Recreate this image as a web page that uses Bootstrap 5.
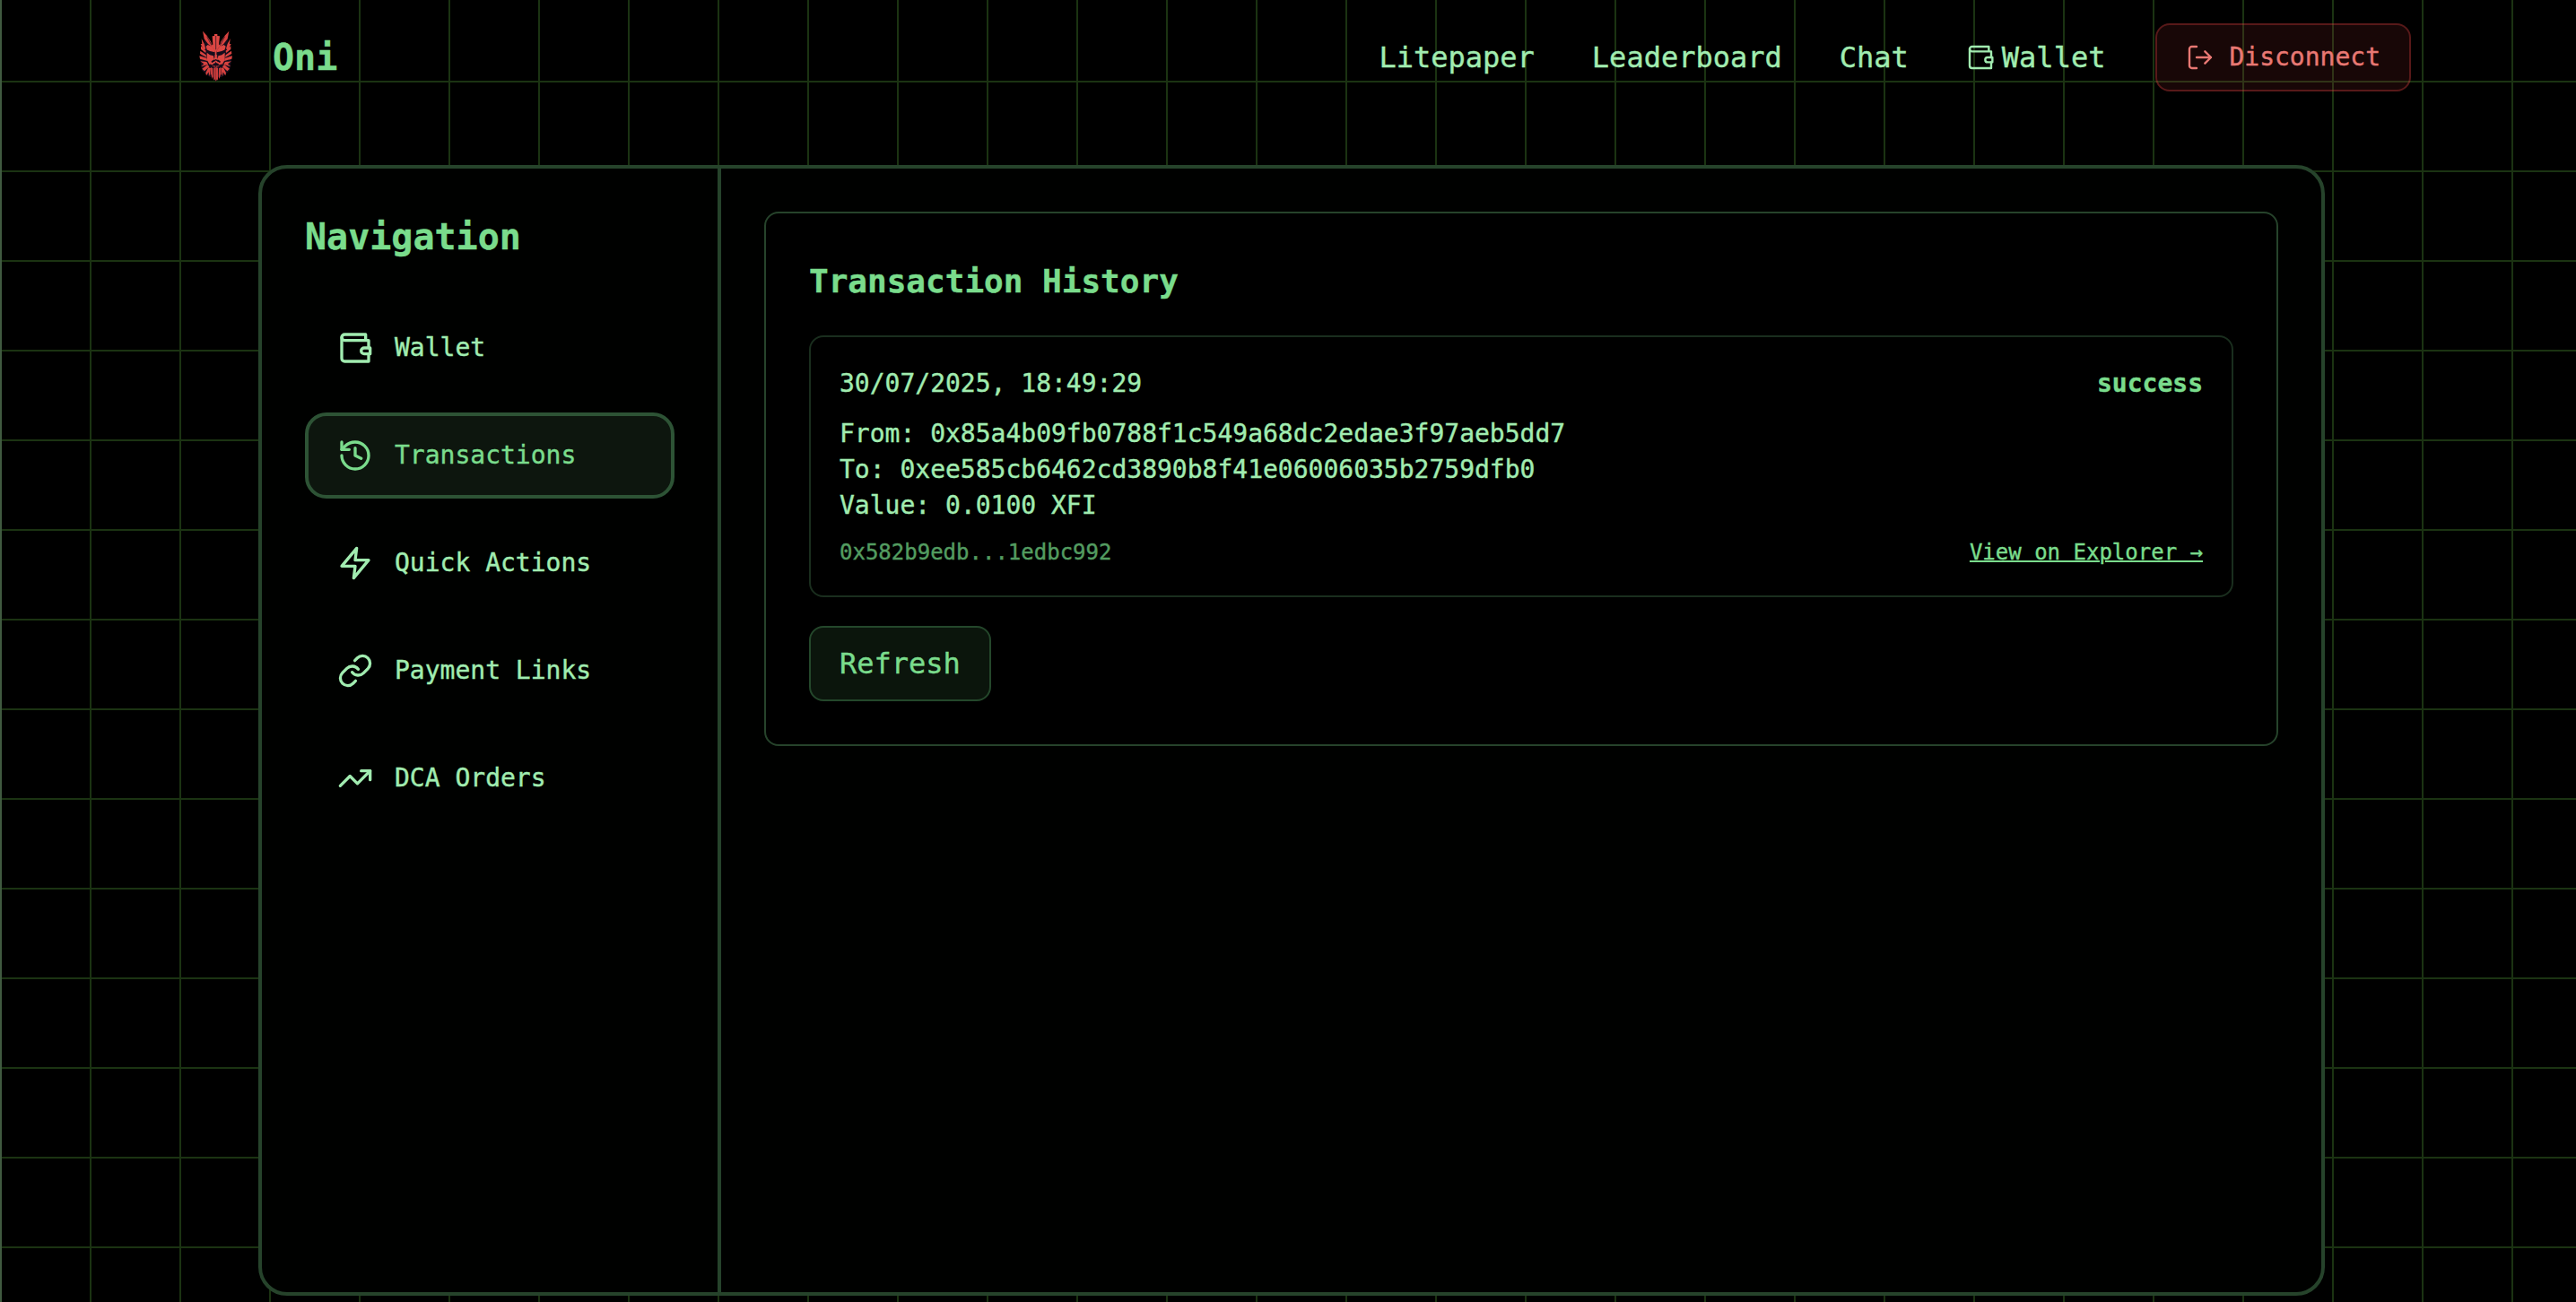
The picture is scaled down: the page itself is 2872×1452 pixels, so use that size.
<!DOCTYPE html>
<html lang="en">
<head>
<meta charset="utf-8">
<title>Oni – Transactions</title>
<meta name="viewport" content="width=device-width, initial-scale=1">
<link rel="stylesheet" href="https://cdn.jsdelivr.net/npm/bootstrap@5.3.0/dist/css/bootstrap.min.css">
<style>
:root{--mint:#a1ecb0;--leaf:#7adc8c;--edge:#26432b}
html,body{height:100%}
body{
  margin:0;overflow:hidden;color:var(--mint);font-family:"DejaVu Sans Mono","Liberation Mono",monospace;
  -webkit-text-stroke:.4px currentColor;
  background-color:#000;
  background-image:linear-gradient(#405a40,#405a40),linear-gradient(to right,#1b3312 2px,transparent 2px),linear-gradient(to bottom,#1b3312 2px,transparent 2px);
  background-size:2px 100%,100px 100px,100px 100px;background-position:0 0,0 0,0 -10px;background-repeat:no-repeat,repeat,repeat;
}
.ico{fill:none;stroke:currentColor;stroke-width:2;stroke-linecap:round;stroke-linejoin:round;flex:none}
.topbar .ico{stroke-width:1.8}
.topbar{height:128px;width:2496px;margin-left:192px;padding:0}
.oni-logo{width:96px;height:80px;margin-right:16px}
.oni-name{font-size:40px;line-height:56px;font-weight:700;color:var(--leaf)}
.toplinks{gap:64px;margin-right:56px}
.toplinks a{font-size:32px;line-height:48px;color:var(--mint);text-decoration:none}
.toplinks .gap-ico{gap:8px}
.btn-leave{--bs-btn-color:#e87873;--bs-btn-bg:rgba(239,68,68,.1);--bs-btn-border-color:rgba(239,68,68,.3);font-family:inherit;font-size:28px;line-height:40px;padding:16px 32px;border-width:2px;border-radius:16px;gap:16px}
.shell{width:2304px;height:1261px;margin:56px 0 0 288px;border:4px solid var(--edge);border-radius:32px;background:#000100;overflow:hidden}
.side{width:512px;border-right:4px solid var(--edge);padding:48px}
.side h2{font-size:40px;line-height:56px;font-weight:700;color:var(--leaf);margin:0 0 48px}
.side .nav{gap:24px}
.side .nav-link{height:96px;padding:0 32px;gap:24px;border:4px solid transparent;border-radius:24px;font-size:28px;line-height:40px;color:var(--mint)}
.side .nav-link.active{background:#0d160e;border-color:#2d5335;color:var(--leaf)}
.main-area{padding:48px}
.panel{border:2px solid var(--edge);border-radius:16px;background:#000;padding:48px;color:inherit}
.panel h3{font-size:36px;line-height:56px;font-weight:700;color:var(--leaf);margin:0 0 32px}
.tx{border:2px solid #1a2e1e;border-radius:16px;padding:32px;font-size:28px;line-height:40px;gap:16px}
.tx .state{color:var(--leaf);font-weight:700}
.tx .foot{font-size:24px;line-height:32px}
.hash{color:#539c60}
.tx a{color:var(--leaf);text-decoration:underline;text-decoration-thickness:2px}
.btn-again{--bs-btn-color:#7adc8c;--bs-btn-bg:#0b150c;--bs-btn-border-color:#24472b;font-family:inherit;font-size:32px;line-height:48px;padding:16px 32px;border-width:2px;border-radius:16px;margin-top:32px}
</style>
</head>
<body>
<header class="topbar navbar d-flex flex-nowrap align-items-center">
  <a class="d-flex align-items-center text-decoration-none" href="#">
    <svg class="oni-logo" viewBox="-72 -12 288 240" aria-hidden="true">
      <defs>
        <g id="half">
          <!-- horn, ear and mane -->
          <path fill="#d8423f" d="M30 20l14 15 14 21 4 18-14-11-13-17zM26 45l9 17 5 17-6 4-5-9-6-11 5 0zM24 70l17 16-1 7-16-12zM22 86l19 14 2 8-22-12zM19 103l24 7 3 10-25-7zM22 121l21 2 5 8-24 8 10-9zM28 146l18-14 6 7-16 15zM40 160l9-18 8 2-3 20-3 7-1-14-8 12z"/>
          <!-- brow, cheek and jaw -->
          <path fill="#dc4743" d="M47 66l15 6 9 12-2 10-24-9-4-14zM44 92l10 8 12 3 2 12-9 6 2 7-8 4-9-16zM62 124l11-5v7l-9 4 4 6 5-2v6l-10-2-6-7z"/>
          <!-- beard -->
          <path fill="#c93c3b" d="M57 141l7 4 1 27-3 8-4-16-2 3zM67 143l7-2v47l-4-7-3 4z"/>
        </g>
      </defs>
      <path fill="#160d1c" d="M34 28l28 42 12-36 14 36 28-42-4 50 16 30-8 44-26 22-10 0-10 16-10-16-10 0-26-22-8-44 16-30z"/>
      <use href="#half"/>
      <use href="#half" transform="matrix(-1 0 0 1 148 0)"/>
      <path fill="#dc4743" d="M62 37l7-1v-6h10v6l8 1-3 29 9-3-15 20-4 26h-1l-4-26-15-20 10 3zM70 98h8l3 17-7 9-7-9z"/>
      <path fill="none" stroke="#160d1c" stroke-width="4" d="M43 84l14 6 13 3M105 84l-14 6-13 3M60 124l14-8 14 8M57 135l17-1 17 1"/>
      <path fill="none" stroke="#160d1c" stroke-width="2" d="M74 36v46M69 96v14M79 96v14M44 38l16 30M104 38L88 68"/>
    </svg>
    <span class="oni-name">Oni</span>
  </a>
  <nav class="toplinks d-flex align-items-center ms-auto">
    <a href="#">Litepaper</a><a href="#">Leaderboard</a><a href="#">Chat</a>
    <a href="#" class="d-flex align-items-center gap-ico"><svg class="ico" width="32" height="32" viewBox="0 0 24 24"><path d="M21 12V7H5a2 2 0 0 1 0-4h14v4"/><path d="M3 5v14a2 2 0 0 0 2 2h16v-5"/><path d="M18 12a2 2 0 0 0 0 4h4v-4Z"/></svg>Wallet</a>
  </nav>
  <button class="btn btn-leave d-flex align-items-center"><svg class="ico" width="32" height="32" viewBox="0 0 24 24"><path d="M9 21H5a2 2 0 0 1-2-2V5a2 2 0 0 1 2-2h4"/><path d="M16 17l5-5-5-5M21 12H9"/></svg>Disconnect</button>
</header>
<div class="shell d-flex">
  <aside class="side flex-shrink-0">
    <h2>Navigation</h2>
    <nav class="nav flex-column">
      <a class="nav-link d-flex align-items-center" href="#"><svg class="ico" width="40" height="40" viewBox="0 0 24 24"><path d="M21 12V7H5a2 2 0 0 1 0-4h14v4"/><path d="M3 5v14a2 2 0 0 0 2 2h16v-5"/><path d="M18 12a2 2 0 0 0 0 4h4v-4Z"/></svg>Wallet</a>
      <a class="nav-link active d-flex align-items-center" href="#"><svg class="ico" width="40" height="40" viewBox="0 0 24 24"><path d="M3 12a9 9 0 1 0 9-9 9.75 9.75 0 0 0-6.74 2.74L3 8"/><path d="M3 3v5h5"/><path d="M12 7v5l4 2"/></svg>Transactions</a>
      <a class="nav-link d-flex align-items-center" href="#"><svg class="ico" width="40" height="40" viewBox="0 0 24 24"><path d="M13 2 3 14h9l-1 8 10-12h-9l1-8z"/></svg>Quick Actions</a>
      <a class="nav-link d-flex align-items-center" href="#"><svg class="ico" width="40" height="40" viewBox="0 0 24 24"><path d="M10 13a5 5 0 0 0 7.54.54l3-3a5 5 0 0 0-7.07-7.07l-1.72 1.71"/><path d="M14 11a5 5 0 0 0-7.54-.54l-3 3a5 5 0 0 0 7.07 7.07l1.71-1.71"/></svg>Payment Links</a>
      <a class="nav-link d-flex align-items-center" href="#"><svg class="ico" width="40" height="40" viewBox="0 0 24 24"><path d="M22 7l-8.500 8.500-5-5L2 17"/><path d="M16 7h6v6"/></svg>DCA Orders</a>
    </nav>
  </aside>
  <main class="main-area flex-grow-1">
    <section class="panel">
      <h3>Transaction History</h3>
      <article class="tx d-flex flex-column">
        <div class="d-flex justify-content-between"><span>30/07/2025, 18:49:29</span><span class="state">success</span></div>
        <div>
          <div>From: 0x85a4b09fb0788f1c549a68dc2edae3f97aeb5dd7</div>
          <div>To: 0xee585cb6462cd3890b8f41e06006035b2759dfb0</div>
          <div>Value: 0.0100 XFI</div>
        </div>
        <div class="foot d-flex justify-content-between"><span class="hash">0x582b9edb...1edbc992</span><a href="#">View on Explorer →</a></div>
      </article>
      <button class="btn btn-again d-block">Refresh</button>
    </section>
  </main>
</div>
<script src="https://cdn.jsdelivr.net/npm/bootstrap@5.3.0/dist/js/bootstrap.bundle.min.js"></script>
</body>
</html>
